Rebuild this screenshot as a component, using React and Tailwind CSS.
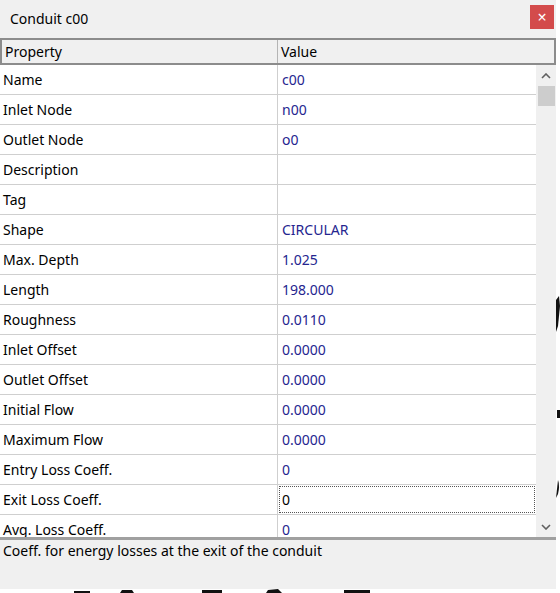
import React from "react";

const rows = [
  ["Name", "c00"],
  ["Inlet Node", "n00"],
  ["Outlet Node", "o0"],
  ["Description", ""],
  ["Tag", ""],
  ["Shape", "CIRCULAR"],
  ["Max. Depth", "1.025"],
  ["Length", "198.000"],
  ["Roughness", "0.0110"],
  ["Inlet Offset", "0.0000"],
  ["Outlet Offset", "0.0000"],
  ["Initial Flow", "0.0000"],
  ["Maximum Flow", "0.0000"],
  ["Entry Loss Coeff.", "0"],
  ["Exit Loss Coeff.", "0", true],
  ["Avg. Loss Coeff.", "0"],
];

export default function App() {
  return (
    <div
      className="relative w-[560px] h-[593px] bg-white overflow-hidden text-[14px] text-black"
      style={{ fontFamily: '"Noto Sans", "Open Sans", sans-serif' }}
    >
      <svg className="absolute left-0 top-0" width="560" height="593">
        <path d="M556 300 l3 -4 l1 10 l-2 20 l-2 6 z" fill="#111" />
        <path d="M557 410 h3 v8 h-3 z" fill="#111" />
        <path d="M558 480 q2 6 0 14 l-2 4 z" fill="#111" />
        <path d="M74 591 h16 v2 h-16 z" fill="#111" />
        <path d="M122 590 l10 0 l2 3 h-14 z" fill="#111" />
        <path d="M202 590 h20 v3 h-20 z" fill="#111" />
        <path d="M268 590 l10 -1 l4 4 h-16 z" fill="#111" />
        <path d="M344 590 h26 v3 h-26 z" fill="#111" />
      </svg>
      <div className="relative w-[556px] h-[589px] bg-[#f0f0f0] flex flex-col">
        <div className="h-[38px] flex items-center justify-between pl-[10px] pr-[2px]">
          <span className="leading-none">Conduit c00</span>
          <div className="w-[24px] h-[24px] bg-[#d34b4b] flex items-center justify-center mb-[4px] text-white text-[16px] leading-none">
            ×
          </div>
        </div>
        <div className="h-[27px] flex border-2 border-[#8c8c8c] bg-[#f0f0f0] leading-none">
          <div className="w-[276px] border-r border-[#b4b4b4] flex items-center pl-[3px]">Property</div>
          <div className="flex-1 flex items-center pl-[3px]">Value</div>
        </div>
        <div className="h-[472px] flex overflow-hidden">
          <div className="w-[536px] bg-white flex flex-col">
            {rows.map(([k, v, sel]) => (
              <div key={k} className="h-[30px] shrink-0 flex border-b border-[#cfcfcf]">
                <div className="w-[278px] border-r border-[#cfcfcf] flex items-center pl-[3px] pb-[1px]">{k}</div>
                <div className="flex-1 flex items-center p-[1px]">
                  {sel ? (
                    <div className="w-full h-full border border-dotted border-[#555] flex items-center pl-[2px] pb-[1px]">{v}</div>
                  ) : (
                    <span className="pl-[3px] pb-[1px] text-[#25258f]">{v}</span>
                  )}
                </div>
              </div>
            ))}
          </div>
          <div className="flex-1 bg-[#f0f0f0] flex flex-col items-center">
            <div className="h-[21px] flex items-center justify-center">
              <svg width="10" height="6" viewBox="0 0 10 6">
                <path d="M1 5 L5 1 L9 5" stroke="#606060" strokeWidth="1.6" fill="none" />
              </svg>
            </div>
            <div className="w-[17px] h-[20px] bg-[#cdcdcd]" />
            <div className="flex-1" />
            <div className="h-[20px] flex items-center justify-center">
              <svg width="10" height="6" viewBox="0 0 10 6">
                <path d="M1 1 L5 5 L9 1" stroke="#606060" strokeWidth="1.6" fill="none" />
              </svg>
            </div>
          </div>
        </div>
        <div className="h-[3px] bg-[#a0a0a0]" />
        <div className="pl-[3px] pt-[2px] leading-[18px]">Coeff. for energy losses at the exit of the conduit</div>
      </div>
    </div>
  );
}
